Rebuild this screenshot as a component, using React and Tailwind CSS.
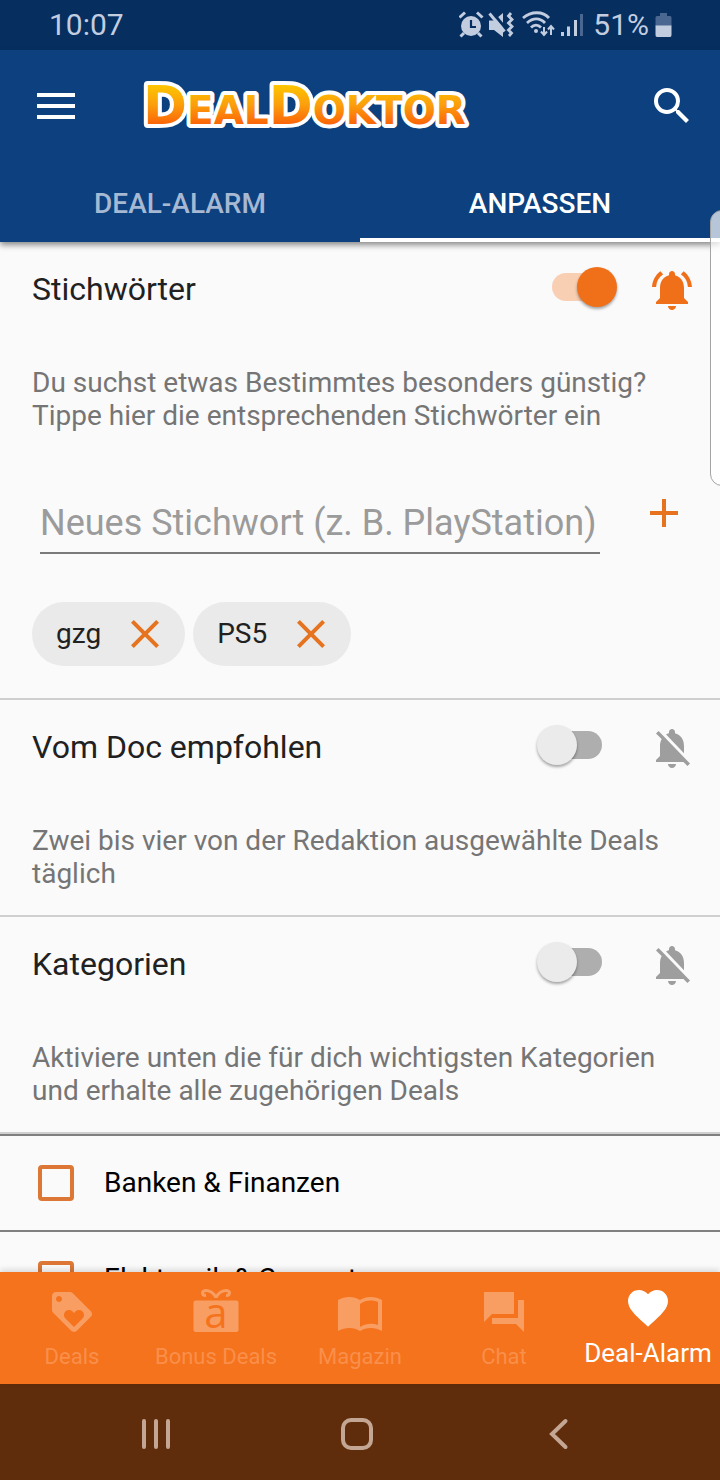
import { useState } from "react";
import {
  MdAdd,
  MdClose,
  MdFavorite,
  MdLoyalty,
  MdNotificationsActive,
  MdNotificationsOff,
  MdSearch,
} from "react-icons/md";

function StatusIcons() {
  return (
    <svg width="126" height="28" viewBox="0 0 126 28" fill="none" stroke="#c3cde0" aria-hidden="true">
      <circle cx="12" cy="15" r="10" fill="#c3cde0" stroke="none" />
      <path d="M0.500 6.500L6 1.500M23.500 6.500L18 1.500" strokeWidth="3" />
      <path d="M5 22L1.500 25.500M19 22L22.500 25.500" strokeWidth="3" />
      <path d="M12 9V16H17" stroke="#062f60" strokeWidth="2.200" />
      <path d="M30 9.500H35L44 2V26L35 19H30Z" fill="#c3cde0" stroke="none" />
      <path d="M33 1L48 19" stroke="#062f60" strokeWidth="3" />
      <path d="M30.500 2.500L45.500 20.500" strokeWidth="3" />
      <path d="M52 2L49.500 5L53 8.500L49.500 12L53 15.500L49.500 19L52.500 22L50 25" strokeWidth="2.800" />
      <path d="M64 7C72 0 84 0 90 7" strokeWidth="2.800" />
      <path d="M68 12C74 6.500 81 6.500 86 12" strokeWidth="2.800" />
      <path d="M72 16.500C75 13.500 79 13.500 82 16.500" strokeWidth="2.800" />
      <circle cx="77" cy="20" r="2" fill="#c3cde0" stroke="none" />
      <path d="M85 16V23M82 20.500L85 24L88 20.500M92 24V16M89 18.500L92 15L95 18.500" strokeWidth="2" />
      <path d="M103.500 25V21M109.500 25V15.500M116.500 25V9" strokeWidth="3" />
      <path d="M122.500 25V3" stroke="#4a6791" strokeWidth="3" />
    </svg>
  );
}

function StatusBar() {
  return (
    <div className="flex h-[50px] shrink-0 items-center justify-between bg-[#062f60] pr-12 pl-[49px] text-[30px] leading-8 text-[#c3cde0]">
      <span>10:07</span>
      <div className="flex items-center">
        <StatusIcons />
        <span className="ml-2">51%</span>
        <svg className="ml-1.5" width="17" height="24" viewBox="0 0 17 24" aria-hidden="true">
          <path d="M5 0H12V3H15Q16.500 3 16.500 4.500V13H0.500V4.500Q0.500 3 2 3H5Z" fill="#4a6791" />
          <path d="M0.500 12.500H16.500V22Q16.500 24 15 24H2Q0.500 24 0.500 22Z" fill="#c3cde0" />
        </svg>
      </div>
    </div>
  );
}

function Logo() {
  return (
    <svg width="360" height="68" viewBox="0 0 360 68" role="img" aria-label="DealDoktor">
      <defs>
        <linearGradient id="logoFill" gradientUnits="userSpaceOnUse" x1="0" y1="14" x2="0" y2="52">
          <stop offset="0" stopColor="#fdc400" />
          <stop offset="0.500" stopColor="#fb9e0c" />
          <stop offset="1" stopColor="#fb6508" />
        </linearGradient>
      </defs>
      <text
        x="2"
        y="52"
        className="font-['DejaVu_Sans',sans-serif] font-bold"
        fill="url(#logoFill)"
        stroke="#ffffff"
        strokeWidth="8"
        strokeLinejoin="round"
        paintOrder="stroke"
      >
        <tspan fontSize="53">D</tspan>
        <tspan fontSize="39">EAL</tspan>
        <tspan fontSize="53">D</tspan>
        <tspan fontSize="39">OKTOR</tspan>
      </text>
    </svg>
  );
}

function AppBar() {
  return (
    <div className="flex h-28 items-center pr-6 pl-8">
      <button type="button" aria-label="Menü" className="flex size-12 items-center justify-center">
        <svg width="38" height="26" viewBox="0 0 38 26" fill="#ffffff" aria-hidden="true">
          <path d="M0 0H38V4H0ZM0 11H38V15H0ZM0 22H38V26H0Z" />
        </svg>
      </button>
      <div className="ml-[61px] flex-1">
        <Logo />
      </div>
      <button type="button" aria-label="Suche">
        <MdSearch className="size-12 text-white" />
      </button>
    </div>
  );
}

function Tabs() {
  return (
    <div role="tablist" className="grid h-20 grid-cols-2 text-[28px] leading-8 font-medium">
      <button type="button" role="tab" aria-selected="false" className="border-b-4 border-transparent pt-2 text-[#a6b8d2]">
        DEAL-ALARM
      </button>
      <button type="button" role="tab" aria-selected="true" className="border-b-4 border-white pt-2 text-white">
        ANPASSEN
      </button>
    </div>
  );
}

function Switch({ label, checked, onChange }) {
  return (
    <label className="relative flex h-10 w-20 items-center justify-center">
      <input
        type="checkbox"
        role="switch"
        aria-label={label}
        checked={checked}
        onChange={(e) => onChange(e.target.checked)}
        className="peer absolute inset-0 size-full cursor-pointer appearance-none"
      />
      <span className="pointer-events-none h-7 w-[50px] rounded-full bg-[#aeaeae] peer-checked:bg-[#f9cfb3]" />
      <span className="pointer-events-none absolute top-0 left-0 size-10 rounded-full bg-[#ebebeb] shadow-[0_2px_3px_rgba(0,0,0,0.35)] peer-checked:left-10 peer-checked:bg-[#f0701a]" />
    </label>
  );
}

function Section({ title, text, initial, className, children }) {
  const [on, setOn] = useState(initial);
  return (
    <section className={"border-b-2 border-[#cfcfcf] " + className}>
      <div className="flex h-24 items-center pr-6 pl-8">
        <h2 className="flex-1 pb-0.5 text-[32px] leading-10 text-[#212121]">{title}</h2>
        <div className="mr-[31px] pb-1.5">
          <Switch label={title} checked={on} onChange={setOn} />
        </div>
        {on ? (
          <MdNotificationsActive className="size-12 text-[#f0701a]" />
        ) : (
          <MdNotificationsOff className="size-12 text-[#9e9e9e]" />
        )}
      </div>
      <p className="mt-7 px-8 text-[28px] leading-[33px] text-[#757575]">{text}</p>
      {children}
    </section>
  );
}

function KeywordForm() {
  const [words, setWords] = useState(["gzg", "PS5"]);
  const [value, setValue] = useState("");
  const add = (e) => {
    e.preventDefault();
    if (value.trim()) setWords([...words, value.trim()]);
    setValue("");
  };
  return (
    <>
      <form onSubmit={add} className="mt-[57px] flex items-start pr-8 pl-10">
        <input
          aria-label="Neues Stichwort"
          value={value}
          onChange={(e) => setValue(e.target.value)}
          placeholder="Neues Stichwort (z. B. PlayStation)"
          className="h-[65px] min-w-0 flex-1 border-b-2 border-[#7a7a7a] bg-transparent pt-1 text-[36px] text-[#212121] outline-none placeholder:text-[#9b9b9b]"
        />
        <button type="submit" aria-label="Stichwort hinzufügen" className="ml-10">
          <MdAdd className="size-12 text-[#e5731f]" />
        </button>
      </form>
      <ul className="mt-12 flex flex-wrap gap-2 px-8">
        {words.map((word) => (
          <li key={word} className="flex h-16 items-center rounded-full bg-[#eaeaea] pr-4 pl-6 text-[28px] text-[#212121]">
            {word}
            <button
              type="button"
              aria-label={word + " entfernen"}
              onClick={() => setWords(words.filter((w) => w !== word))}
              className="ml-5"
            >
              <MdClose className="size-12 text-[#e5731f]" />
            </button>
          </li>
        ))}
      </ul>
    </>
  );
}

function CategoryRow({ name }) {
  return (
    <li className="border-b-2 border-[#808080]">
      <label className="flex h-[94px] items-center pl-[38px] text-[28px] text-black">
        <input
          type="checkbox"
          className="mr-[30px] size-9 appearance-none rounded-sm border-4 border-[#dd7735] checked:bg-[#dd7735]"
        />
        {name}
      </label>
    </li>
  );
}

function GiftIcon() {
  return (
    <svg width="48" height="48" viewBox="0 0 48 48" className="overflow-visible" aria-hidden="true">
      <rect x="1.500" y="12.500" width="45" height="31.500" rx="2" fill="currentColor" />
      <path
        d="M24 9.500C20 1.500 12 1.500 10.500 4.500Q10 7.500 14 7.500M24 9.500C28 1.500 36 1.500 37.500 4.500Q38 7.500 34 7.500"
        fill="none"
        stroke="currentColor"
        strokeWidth="3"
      />
      <text x="24" y="40" textAnchor="middle" fontSize="42" className="fill-[#f5731c] font-['Open_Sans',sans-serif]">
        a
      </text>
    </svg>
  );
}

function BookIcon() {
  return (
    <svg width="48" height="48" viewBox="0 0 48 48" fill="currentColor" aria-hidden="true">
      <path
        fillRule="evenodd"
        d="M2 12C9 8 18 8 24 12C30 8 39 8 46 12V43C39 39 30 39 24 43C18 39 9 39 2 43ZM24 16V39C30 35.500 36 35 42 37V14C37 11.500 29 12 24 16Z"
      />
    </svg>
  );
}

function ChatIcon() {
  return (
    <svg width="48" height="48" viewBox="0 0 48 48" fill="currentColor" aria-hidden="true">
      <path d="M4 4H34V26H12L4 34ZM38 12H44V44L36 36H12V30H38Z" />
    </svg>
  );
}

const navItems = [
  { label: "Deals", Icon: () => <MdLoyalty className="size-12" /> },
  { label: "Bonus Deals", Icon: GiftIcon },
  { label: "Magazin", Icon: BookIcon },
  { label: "Chat", Icon: ChatIcon },
];

function BottomNav() {
  return (
    <nav className="z-10 grid h-28 shrink-0 grid-cols-5 bg-[#f5731c] whitespace-nowrap shadow-[0_-2px_6px_rgba(0,0,0,0.15)]">
      {navItems.map(({ label, Icon }) => (
        <a key={label} href="#" className="flex flex-col items-center gap-2 pt-4 text-[#f99e63]">
          <Icon />
          <span className="text-[22px] leading-[26px] text-[#f98f4b]">{label}</span>
        </a>
      ))}
      <a href="#" aria-current="page" className="flex flex-col items-center gap-2 pt-3 text-white">
        <MdFavorite className="size-12" />
        <span className="text-[26px] leading-[26px]">Deal-Alarm</span>
      </a>
    </nav>
  );
}

function SystemBar() {
  return (
    <div className="grid h-24 shrink-0 grid-cols-3 items-center justify-items-center bg-[#602d0c] pt-1 pr-[60px] pl-[55px]">
      <button type="button" aria-label="Letzte Apps">
        <svg width="32" height="32" viewBox="0 0 32 32" stroke="#c4a694" strokeWidth="4" strokeLinecap="round">
          <path d="M4 3V29M16 3V29M28 3V29" />
        </svg>
      </button>
      <button type="button" aria-label="Startseite">
        <svg width="32" height="32" viewBox="0 0 32 32" fill="none" stroke="#c4a694" strokeWidth="4">
          <rect x="2" y="2" width="28" height="28" rx="8" />
        </svg>
      </button>
      <button type="button" aria-label="Zurück">
        <svg width="32" height="32" viewBox="0 0 32 32" fill="none" stroke="#c4a694" strokeWidth="4" strokeLinecap="round">
          <path d="M22.500 3L9 16L22.500 29" />
        </svg>
      </button>
    </div>
  );
}

export default function App() {
  return (
    <div className="relative flex h-screen flex-col overflow-hidden bg-[#fafafa] font-['Roboto',sans-serif]">
      <StatusBar />
      <header className="z-10 shrink-0 bg-[#0c407e] shadow-[0_3px_6px_rgba(0,0,0,0.45)]">
        <AppBar />
        <Tabs />
      </header>
      <main className="min-h-0 flex-1 overflow-y-auto [scrollbar-width:none]">
        <Section
          title="Stichwörter"
          text="Du suchst etwas Bestimmtes besonders günstig? Tippe hier die entsprechenden Stichwörter ein"
          initial={true}
          className="pb-8"
        >
          <KeywordForm />
        </Section>
        <Section
          title="Vom Doc empfohlen"
          text="Zwei bis vier von der Redaktion ausgewählte Deals täglich"
          initial={false}
          className="pb-[25px]"
        />
        <Section
          title="Kategorien"
          text="Aktiviere unten die für dich wichtigsten Kategorien und erhalte alle zugehörigen Deals"
          initial={false}
          className="pb-[25px]"
        />
        <ul className="border-t-2 border-[#808080]">
          <CategoryRow name="Banken & Finanzen" />
          <CategoryRow name="Elektronik & Computer" />
        </ul>
      </main>
      <BottomNav />
      <SystemBar />
      <div className="absolute top-[210px] -right-1 z-20 h-[276px] w-3.5 rounded-l-xl border border-[#a3a3a3] bg-white/70" />
    </div>
  );
}
